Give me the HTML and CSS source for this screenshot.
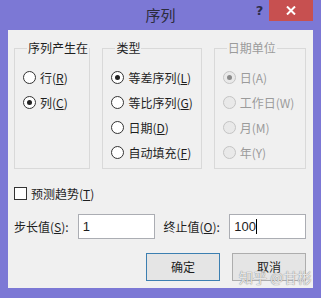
FILE: index.html
```html
<!DOCTYPE html>
<html lang="zh">
<head>
<meta charset="utf-8">
<title>序列</title>
<link rel="stylesheet" href="styles.css">
</head>
<body>
<div class="window">
  <div class="titlebar">
    <div class="spacer"></div>
    <div class="title">序列</div>
    <div class="controls">
      <span class="help">?</span>
      <div class="close">
        <svg width="10" height="9" viewBox="0 0 10 9"><path d="M1 0.5 L9 8.5 M9 0.5 L1 8.5" stroke="#fff" stroke-width="2"/></svg>
      </div>
    </div>
  </div>
  <div class="client">
    <div class="groups">
      <fieldset class="group g1">
        <legend>序列产生在</legend>
        <div class="radio"><span class="dot"></span>行(<u>R</u>)</div>
        <div class="radio"><span class="dot on"></span>列(<u>C</u>)</div>
      </fieldset>
      <fieldset class="group g2">
        <legend>类型</legend>
        <div class="radio"><span class="dot on"></span>等差序列(<u>L</u>)</div>
        <div class="radio"><span class="dot"></span>等比序列(<u>G</u>)</div>
        <div class="radio"><span class="dot"></span>日期(<u>D</u>)</div>
        <div class="radio"><span class="dot"></span>自动填充(<u>F</u>)</div>
      </fieldset>
      <fieldset class="group g3 disabled">
        <legend>日期单位</legend>
        <div class="radio"><span class="dot on"></span>日(A)</div>
        <div class="radio"><span class="dot"></span>工作日(W)</div>
        <div class="radio"><span class="dot"></span>月(M)</div>
        <div class="radio"><span class="dot"></span>年(Y)</div>
      </fieldset>
    </div>
    <div class="check-row"><span class="box"></span>预测趋势(<u>T</u>)</div>
    <div class="fields">
      <span class="lbl l1">步长值(<u>S</u>):</span>
      <div class="input">1</div>
      <span class="lbl l2">终止值(<u>O</u>):</span>
      <div class="input">100<span class="caret"></span></div>
    </div>
    <div class="buttons">
      <div class="btn default">确定</div>
      <div class="btn">取消</div>
    </div>
    <div class="watermark">知乎 @甘彬</div>
  </div>
</div>
</body>
</html>
```

FILE: styles.css
```css
* { box-sizing: border-box; }
html, body { margin: 0; padding: 0; }
body {
  width: 321px;
  height: 298px;
  overflow: hidden;
  font-family: "Noto Sans CJK SC", "Microsoft YaHei", sans-serif;
  font-size: 12px;
  color: #1e1e1e;
}
.window {
  width: 321px;
  height: 298px;
  background: #7c78d5;
  display: flex;
  flex-direction: column;
}
.titlebar {
  height: 30px;
  display: flex;
  align-items: flex-start;
}
.spacer { width: 71px; }
.title {
  flex: 1;
  text-align: center;
  font-size: 15px;
  line-height: 30px;
  color: #2c2c3c;
}
.controls {
  width: 71px;
  display: flex;
  align-items: flex-start;
  padding-right: 8px;
}
.help {
  width: 19px;
  text-align: center;
  font-family: "DejaVu Sans", sans-serif;
  font-weight: bold;
  font-size: 13px;
  line-height: 22px;
  color: #2d2d4a;
}
.close {
  width: 44px;
  height: 21px;
  background: #c75050;
  display: flex;
  align-items: center;
  justify-content: center;
}
.client {
  position: relative;
  margin: 0 8px;
  height: 258px;
  background: #f0f0f0;
  padding: 11px 7px 0 6px;
}
.groups {
  display: flex;
  gap: 12px;
}
.group {
  margin: 0;
  padding: 10px 0 0 8px;
  min-width: 0;
  height: 128px;
  border: 1px solid #d9d9d9;
  border-top-color: #d9d9d9;
}
.group legend {
  padding: 0 1px;
  margin-left: 4px;
  font-size: 12px;
  line-height: 14px;
  color: #1e1e1e;
}
.g1 { width: 77px; }
.g2 { width: 100px; }
.g3 { width: 93px; }
.radio {
  height: 25px;
  display: flex;
  align-items: center;
  line-height: 14px;
  white-space: nowrap;
}
.dot {
  width: 13px;
  height: 13px;
  border: 1px solid #333;
  border-radius: 50%;
  background: #fff;
  margin-right: 4px;
  flex: none;
  display: flex;
  align-items: center;
  justify-content: center;
}
.dot.on::after {
  content: "";
  width: 5px;
  height: 5px;
  border-radius: 50%;
  background: #222;
}
.disabled legend, .disabled .radio { color: #9b9b9b; }
.disabled .dot { border-color: #c4c4c4; background: #e9e9e9; }
.disabled .dot.on::after { background: #8a8a8a; }
.check-row {
  margin-top: 18px;
  height: 13px;
  display: flex;
  align-items: center;
  line-height: 14px;
}
.box {
  width: 13px;
  height: 13px;
  border: 1px solid #333;
  background: #fff;
  margin-right: 4px;
}
.fields {
  margin-top: 14px;
  height: 25px;
  display: flex;
  align-items: center;
}
.lbl { line-height: 14px; white-space: nowrap; }
.l1 { width: 64px; }
.l2 { width: 67px; margin-left: 8px; padding-left: 1px; }
.input {
  width: 77px;
  height: 25px;
  border: 1px solid #abadb3;
  background: #fff;
  font-family: "Liberation Sans", Arial, sans-serif;
  font-size: 13px;
  line-height: 23px;
  padding-left: 4px;
  display: flex;
  align-items: center;
}
.caret {
  width: 1px;
  height: 15px;
  background: #000;
}
.buttons {
  margin-top: 14px;
  display: flex;
  justify-content: flex-end;
  gap: 12px;
}
.btn {
  width: 74px;
  height: 28px;
  border: 1px solid #adadad;
  background: #e5e5e5;
  text-align: center;
  line-height: 26px;
  font-size: 12px;
}
.btn.default { border-color: #3c7fb1; }
.watermark {
  position: absolute;
  left: 231px;
  top: 239px;
  font-size: 14px;
  line-height: 16px;
  color: rgba(255,255,255,0.8);
  text-shadow: 0 0 1px #888, 0 0 1px #999;
  white-space: nowrap;
}
```
